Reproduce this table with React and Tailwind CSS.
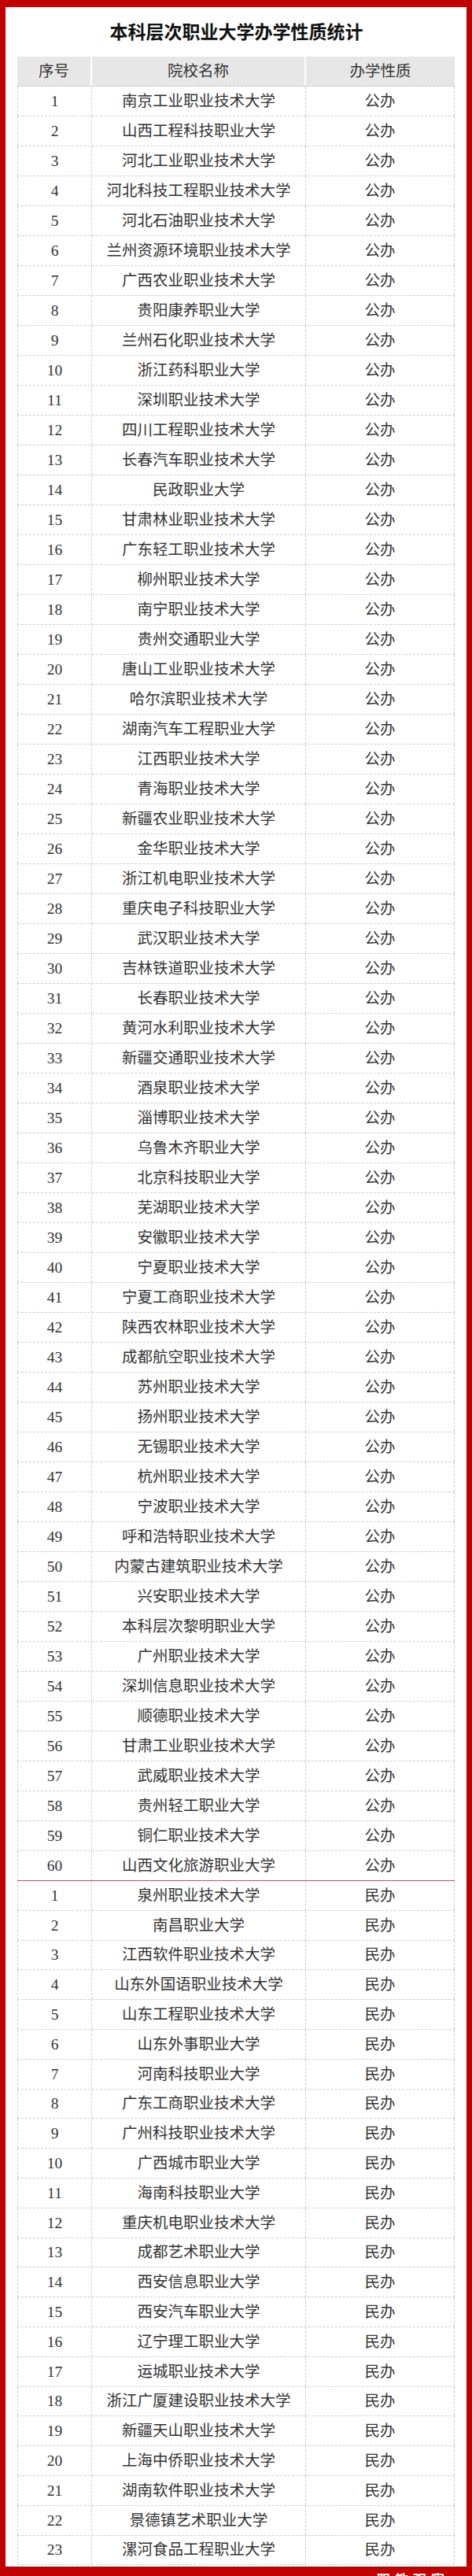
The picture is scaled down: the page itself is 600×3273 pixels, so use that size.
import React from 'react';

const publicSchools = [
  '南京工业职业技术大学', '山西工程科技职业大学', '河北工业职业技术大学', '河北科技工程职业技术大学',
  '河北石油职业技术大学', '兰州资源环境职业技术大学', '广西农业职业技术大学', '贵阳康养职业大学',
  '兰州石化职业技术大学', '浙江药科职业大学', '深圳职业技术大学', '四川工程职业技术大学',
  '长春汽车职业技术大学', '民政职业大学', '甘肃林业职业技术大学', '广东轻工职业技术大学',
  '柳州职业技术大学', '南宁职业技术大学', '贵州交通职业大学', '唐山工业职业技术大学',
  '哈尔滨职业技术大学', '湖南汽车工程职业大学', '江西职业技术大学', '青海职业技术大学',
  '新疆农业职业技术大学', '金华职业技术大学', '浙江机电职业技术大学', '重庆电子科技职业大学',
  '武汉职业技术大学', '吉林铁道职业技术大学', '长春职业技术大学', '黄河水利职业技术大学',
  '新疆交通职业技术大学', '酒泉职业技术大学', '淄博职业技术大学', '乌鲁木齐职业大学',
  '北京科技职业大学', '芜湖职业技术大学', '安徽职业技术大学', '宁夏职业技术大学',
  '宁夏工商职业技术大学', '陕西农林职业技术大学', '成都航空职业技术大学', '苏州职业技术大学',
  '扬州职业技术大学', '无锡职业技术大学', '杭州职业技术大学', '宁波职业技术大学',
  '呼和浩特职业技术大学', '内蒙古建筑职业技术大学', '兴安职业技术大学', '本科层次黎明职业大学',
  '广州职业技术大学', '深圳信息职业技术大学', '顺德职业技术大学', '甘肃工业职业技术大学',
  '武威职业技术大学', '贵州轻工职业大学', '铜仁职业技术大学', '山西文化旅游职业大学',
];

const privateSchools = [
  '泉州职业技术大学', '南昌职业大学', '江西软件职业技术大学', '山东外国语职业技术大学',
  '山东工程职业技术大学', '山东外事职业大学', '河南科技职业大学', '广东工商职业技术大学',
  '广州科技职业技术大学', '广西城市职业大学', '海南科技职业大学', '重庆机电职业技术大学',
  '成都艺术职业大学', '西安信息职业大学', '西安汽车职业大学', '辽宁理工职业大学',
  '运城职业技术大学', '浙江广厦建设职业技术大学', '新疆天山职业技术大学', '上海中侨职业技术大学',
  '湖南软件职业技术大学', '景德镇艺术职业大学', '漯河食品工程职业大学',
];

const Row = ({ no, name, type, tall, divider }) => (
  <div
    className={
      'flex ' +
      (tall ? 'h-[38px] ' : 'h-[37.8px] ') +
      (divider ? 'border-b border-solid border-[#c0506a]' : 'border-b border-dashed border-[#cfcfcf]')
    }
  >
    <div className="w-[95px] flex items-center justify-center border-l border-r border-dashed border-[#cfcfcf]">
      {no}
    </div>
    <div className="w-[272px] flex items-center justify-center border-r border-dashed border-[#cfcfcf]">
      {name}
    </div>
    <div className="w-[189px] flex items-center justify-center border-r border-dashed border-[#cfcfcf]">
      {type}
    </div>
  </div>
);

export default function App() {
  return (
    <div className="bg-[#c10000] px-[7px] pt-[9px] font-['Liberation_Serif','Noto_Sans_CJK_SC',serif]">
      <div className="bg-white pl-[15px] pr-[14px] pb-[2px]">
        <h1 className="pt-[14px] pb-[11px] text-center text-[23px] leading-[38px] font-bold text-[#111]">
          本科层次职业大学办学性质统计
        </h1>

        <div className="w-[556px] text-[19.5px] text-[#333]">
          <div className="flex h-[38px] bg-[#e7e7e7] border-b border-dashed border-[#c4c4c4]">
            <div className="w-[95px] flex items-center justify-center border-r-2 border-white">序号</div>
            <div className="w-[272px] flex items-center justify-center border-r-2 border-white">院校名称</div>
            <div className="w-[189px] flex items-center justify-center">办学性质</div>
          </div>

          {publicSchools.map((name, i) => (
            <Row key={'g' + i} no={i + 1} name={name} type="公办" tall divider={i === publicSchools.length - 1} />
          ))}
          {privateSchools.map((name, i) => (
            <Row key={'m' + i} no={i + 1} name={name} type="民办" />
          ))}
        </div>
      </div>

      <div className="h-[13px] overflow-hidden flex justify-end pr-[22px]">
        <span className="pt-[9px] text-[17px] leading-none font-bold text-white tracking-[6px]">
          职教观察
        </span>
      </div>
    </div>
  );
}
